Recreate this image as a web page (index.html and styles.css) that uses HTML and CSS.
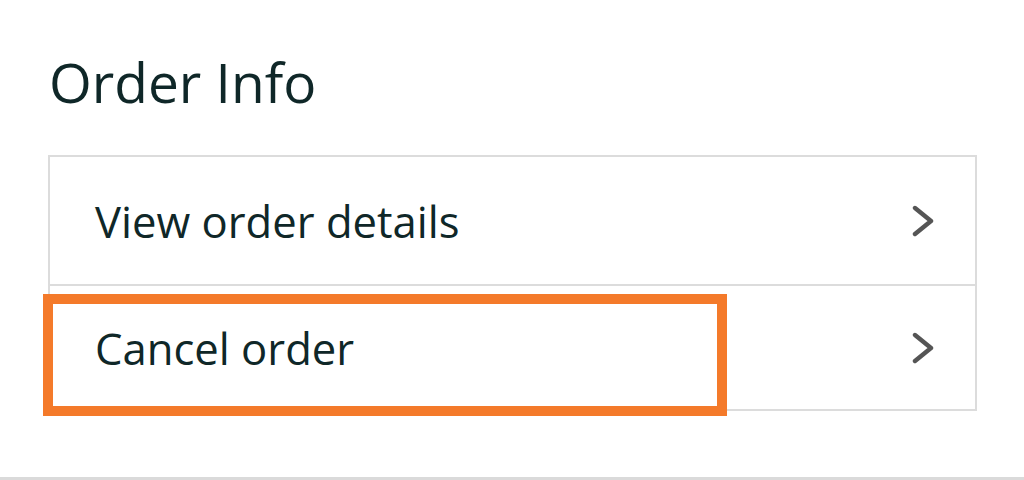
FILE: index.html
```html
<!DOCTYPE html>
<html lang="en">
<head>
<meta charset="utf-8">
<title>Order Info</title>
<link rel="stylesheet" href="styles.css">
</head>
<body>
<main class="page">
  <h1 class="title">Order Info</h1>
  <div class="card">
    <a class="row" href="#">
      <span class="label">View order details</span>
      <svg class="chev" viewBox="0 0 22 32" width="22" height="32" aria-hidden="true"><polyline points="3,3 19,16 3,29" /></svg>
    </a>
    <a class="row row-second" href="#">
      <span class="label">Cancel order</span>
      <svg class="chev" viewBox="0 0 22 32" width="22" height="32" aria-hidden="true"><polyline points="3,3 19,16 3,29" /></svg>
    </a>
    <div class="highlight"></div>
  </div>
  <div class="bottom-rule"></div>
</main>
</body>
</html>
```

FILE: styles.css
```css
html, body {
  margin: 0;
  padding: 0;
  background: #ffffff;
}
body {
  font-family: "Open Sans", "Noto Sans", sans-serif;
  color: #0f2728;
  width: 1024px;
  height: 480px;
  overflow: hidden;
}
.page {
  padding-top: 50px;
}
.title {
  margin: 0 0 41px 49px;
  font-size: 55px;
  line-height: 64px;
  height: 64px;
  font-weight: 400;
  color: #0f2728;
}
.card {
  position: relative;
  margin-left: 48px;
  width: 925px;
  border: 2px solid #dcdcdc;
}
.row {
  display: flex;
  align-items: center;
  justify-content: space-between;
  height: 127px;
  padding: 0 41px 0 45px;
  color: #0f2728;
  text-decoration: none;
}
.row-second {
  height: 123px;
  border-top: 2px solid #dcdcdc;
}
.label {
  font-size: 43.6px;
}
.chev {
  display: block;
  fill: none;
  stroke: #555555;
  stroke-width: 4.4;
  stroke-linecap: round;
  stroke-linejoin: round;
}
.highlight {
  position: absolute;
  left: -7px;
  top: 137px;
  width: 664px;
  height: 102px;
  border: 10px solid #f47a2a;
}
.bottom-rule {
  margin-top: 66px;
  height: 3px;
  background: #dadada;
}
```
